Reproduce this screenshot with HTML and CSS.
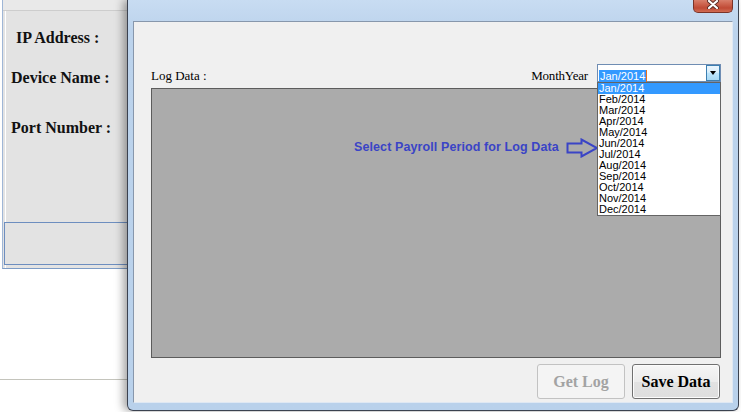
FILE: index.html
```html
<!DOCTYPE html>
<html>
<head>
<meta charset="utf-8">
<title>Log Data</title>
<link rel="stylesheet" href="styles.css">
</head>
<body>
<div class="desk">
  <div class="back">
    <div class="back-top"></div>
    <div class="back-body">
      <div class="lbl lbl-ip">IP Address :</div>
      <div class="lbl lbl-dev">Device Name :</div>
      <div class="lbl lbl-port">Port Number :</div>
      <div class="status"></div>
    </div>
  </div>
  <div class="desk-line"></div>

  <div class="win">
    <div class="close">
      <svg width="12" height="9" viewBox="0 0 12 9">
        <path d="M2 1 L10 8 M10 1 L2 8" stroke="#5a2a24" stroke-width="4" stroke-linecap="round"/>
        <path d="M2 1 L10 8 M10 1 L2 8" stroke="#ffffff" stroke-width="2.2" stroke-linecap="round"/>
      </svg>
    </div>
    <div class="client">
      <div class="toprow">
        <span class="lab">Log Data :</span>
        <div class="picker">
          <span class="lab">MonthYear</span>
          <div class="combo-wrap">
            <div class="combo">
              <span class="combo-text"><span class="sel">Jan/2014</span></span>
              <span class="combo-btn"><span class="tri"></span></span>
            </div>
            <ul class="list">
              <li class="on">Jan/2014</li>
              <li>Feb/2014</li>
              <li>Mar/2014</li>
              <li>Apr/2014</li>
              <li>May/2014</li>
              <li>Jun/2014</li>
              <li>Jul/2014</li>
              <li>Aug/2014</li>
              <li>Sep/2014</li>
              <li>Oct/2014</li>
              <li>Nov/2014</li>
              <li>Dec/2014</li>
            </ul>
          </div>
        </div>
      </div>
      <div class="logarea">
        <div class="note">Select Payroll Period for Log Data</div>
        <svg class="note-arrow" width="33" height="20" viewBox="0 0 33 20">
          <path d="M1.5 5.5 H15.5 V1.5 L31 10 L15.5 18.5 V14.5 H1.5 Z" fill="none" stroke="#3a44c6" stroke-width="2" stroke-linejoin="miter"/>
        </svg>
      </div>
      <div class="btnrow">
        <button class="btn btn-off">Get Log</button>
        <button class="btn">Save Data</button>
      </div>
    </div>
  </div>
</div>
</body>
</html>
```
FILE: styles.css
```css
html, body {
  margin: 0;
  padding: 0;
  background: #ffffff;
}
.desk {
  position: relative;
  width: 741px;
  height: 412px;
  overflow: hidden;
}

/* background window */
.back {
  margin-left: 2px;
  width: 160px;
  height: 268px;
  border-left: 1px solid #9fb6d6;
  border-bottom: 1px solid #7d9cc6;
  background: #e3e3e3;
}
.back-top {
  height: 10px;
  background: #e9e9e9;
  border-bottom: 1px solid #cdcdcd;
}
.back-body {
  border-left: 1px solid #ffffff;
  margin-left: 2px;
  height: 257px;
  display: flex;
  flex-direction: column;
}
.lbl {
  font-family: "Liberation Serif", "Times New Roman", serif;
  font-weight: bold;
  font-size: 16px;
  line-height: 18px;
  color: #111;
  white-space: nowrap;
}
.lbl-ip { margin-top: 18px; margin-left: 10px; }
.lbl-dev { margin-top: 22px; margin-left: 5px; }
.lbl-port { margin-top: 32px; margin-left: 5px; }
.status {
  margin-top: 85px;
  margin-left: -2px;
  height: 41px;
  border: 1px solid #6d8ebf;
  background: #e3e3e3;
}
.desk-line {
  margin-top: 110px;
  width: 130px;
  height: 1px;
  background: #c4c4bc;
}

/* front window */
.win {
  position: absolute;
  left: 127px;
  top: 0;
  width: 612px;
  height: 411px;
  border: 1px solid #3b4250;
  border-top: none;
  border-radius: 0 0 6px 6px;
  background: linear-gradient(to bottom, #c8dcf2 0px, #bcd3ec 30px, #b9d1eb 100%);
  box-shadow: -4px 0 9px rgba(0, 0, 0, 0.35);
  padding: 21px 0 0 5px;
  box-sizing: border-box;
}
.close {
  position: absolute;
  left: 565px;
  top: -5px;
  width: 40px;
  height: 18px;
  border: 1px solid #7b3328;
  border-top: none;
  border-radius: 0 0 5px 5px;
  background: linear-gradient(to bottom, #e4a190 0px, #d06a55 8px, #c04a35 13px, #d5755c 18px);
  box-sizing: border-box;
  display: flex;
  align-items: flex-end;
  justify-content: center;
  padding-bottom: 3px;
}
.close svg { display: block; }

.client {
  width: 600px;
  height: 382px;
  box-sizing: border-box;
  background: #f0f0f0;
  border: 1px solid;
  border-color: #8797ac #dfe8f3 #dfe8f3 #8797ac;
  padding: 42px 11px 0 17px;
  display: flex;
  flex-direction: column;
}
.toprow {
  height: 18px;
  display: flex;
  justify-content: space-between;
  align-items: flex-start;
}
.lab {
  font-family: "Liberation Serif", "Times New Roman", serif;
  font-size: 13px;
  line-height: 15px;
  padding-top: 4px;
  color: #000;
  white-space: nowrap;
}
.picker {
  display: flex;
  align-items: flex-start;
  gap: 9px;
}
.picker .lab { letter-spacing: -0.2px; }
.combo-wrap {
  position: relative;
  width: 124px;
}
.combo {
  height: 18px;
  box-sizing: border-box;
  border: 1px solid #6f8db3;
  background: #ffffff;
  display: flex;
  align-items: stretch;
}
.combo-text {
  flex: 1;
  padding: 1px 0 0 1px;
}
.sel {
  display: inline-block;
  font-family: "Liberation Sans", Arial, sans-serif;
  font-size: 11px;
  line-height: 13px;
  background: #3399ff;
  color: #ffffff;
  padding: 0 1px;
  border-right: 1px solid #e8701e;
}
.combo-btn {
  width: 14px;
  box-sizing: border-box;
  border: 1px solid #3c7fb1;
  background: linear-gradient(to bottom, #eaf5fd 0%, #d9effc 45%, #bee6fd 50%, #a7d9f5 100%);
  display: flex;
  align-items: center;
  justify-content: center;
}
.tri {
  width: 0;
  height: 0;
  border-left: 3.5px solid transparent;
  border-right: 3.5px solid transparent;
  border-top: 4px solid #000;
}
.list {
  position: absolute;
  left: 0;
  top: 18px;
  width: 124px;
  margin: 0;
  padding: 0;
  list-style: none;
  box-sizing: border-box;
  border: 1px solid #646464;
  background: #ffffff;
  z-index: 5;
}
.list li {
  font-family: "Liberation Sans", Arial, sans-serif;
  font-size: 11px;
  line-height: 11px;
  height: 11px;
  padding-left: 1px;
  color: #000;
  white-space: nowrap;
}
.list li.on {
  background: #3399ff;
  color: #fff;
}

.logarea {
  position: relative;
  margin-top: 6px;
  height: 270px;
  box-sizing: border-box;
  border: 1px solid #5c5c5c;
  background: #ababab;
}
.note {
  position: absolute;
  left: 202px;
  top: 51px;
  font-family: "Liberation Sans", Arial, sans-serif;
  font-weight: bold;
  font-size: 12.5px;
  letter-spacing: 0.1px;
  line-height: 14px;
  color: #3a44c6;
  white-space: nowrap;
}
.note-arrow {
  position: absolute;
  left: 414px;
  top: 49px;
}

.btnrow {
  margin-top: 6px;
  display: flex;
  justify-content: flex-end;
  gap: 7px;
  padding-right: 1px;
}
.btn {
  width: 88px;
  height: 35px;
  box-sizing: border-box;
  border: 1px solid #707070;
  border-radius: 3px;
  background: linear-gradient(to bottom, #f6f6f6 0%, #ececec 50%, #e2e2e2 51%, #dedede 100%);
  box-shadow: inset 0 0 0 1px #fcfcfc;
  font-family: "Liberation Serif", "Times New Roman", serif;
  font-weight: bold;
  font-size: 16px;
  color: #000;
  padding: 0;
}
.btn-off {
  border-color: #c2c2c2;
  background: #f4f4f4;
  box-shadow: none;
  color: #a3a3a3;
}
```
